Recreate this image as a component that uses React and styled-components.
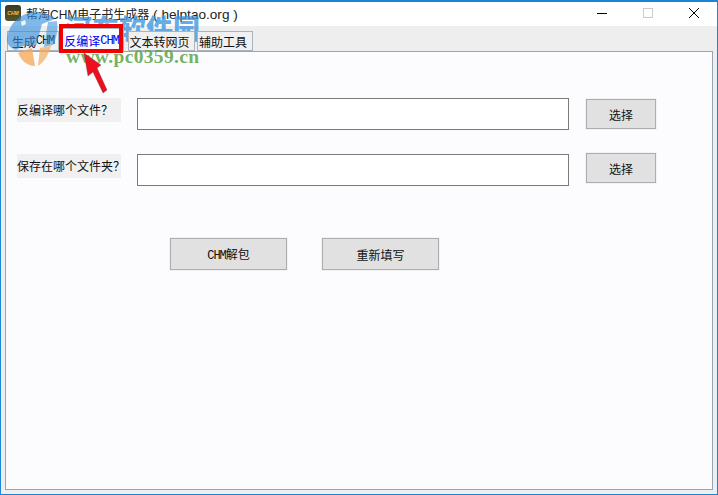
import React from "react";
import styled, { createGlobalStyle } from "styled-components";

const GlobalStyle = createGlobalStyle`
    html, body {
        margin: 0;
        padding: 0;
        width: 718px;
        height: 495px;
        overflow: hidden;
        background: #eeeeee;
    }
    * {
        box-sizing: border-box;
    }
`

const Window = styled.div`
    position: relative;
    display: flex;
    flex-direction: column;
    width: 718px;
    height: 495px;
    background: #eeeeee;
    border: 1px solid #1b86d8;
    border-top-width: 2px;
    font-family: "Noto Sans CJK SC", "Liberation Sans", sans-serif;
    color: #111;
    overflow: hidden;
`

const TitleBar = styled.div`
    display: flex;
    align-items: center;
    height: 24px;
    flex-shrink: 0;
    background: #fff;
`

const AppIcon = styled.div`
    display: flex;
    align-items: center;
    justify-content: center;
    width: 16px;
    height: 16px;
    margin: 0 0 2px 4px;
    border-radius: 3px;
    background: linear-gradient(#3a3a22, #57552a);
    color: #e5c84a;
    font: italic bold 5px "Liberation Sans", sans-serif;
`

const Title = styled.div`
    margin: 0 0 2px 5px;
    font-family: "Liberation Sans", "Noto Sans CJK SC", sans-serif;
    font-size: 12px;
    color: #222;
    white-space: pre;
`

const TitleLatin = styled.span`
    font-size: 13.6px;
`

const WindowButtons = styled.div`
    display: flex;
    margin-left: auto;
    height: 100%;
`

const WindowButton = styled.div`
    display: flex;
    align-items: center;
    justify-content: center;
    width: 46px;
    height: 100%;
    padding-bottom: 2px;
`

const TabStrip = styled.div`
    display: flex;
    align-items: flex-end;
    height: 25px;
    flex-shrink: 0;
    padding-left: 6px;
`

const Tab = styled.div`
    display: flex;
    align-items: center;
    justify-content: center;
    width: ${(props) => props.width}px;
    height: ${(props) => (props.active ? 24 : 20)}px;
    margin-left: ${(props) => props.offset || 0}px;
    padding-right: ${(props) => props.pad || 0}px;
    background: ${(props) => (props.active ? "#fcfcff" : "#f0f0f0")};
    border: 1px solid #a9b4bf;
    border-bottom: ${(props) => (props.active ? "none" : "1px solid #a9b4bf")};
    color: ${(props) => (props.active ? "#0000ee" : "#111")};
    font-size: 12px;
    white-space: nowrap;
    position: relative;
    z-index: ${(props) => (props.active ? 2 : 1)};
    margin-bottom: ${(props) => (props.active ? "-1px" : "0")};
`

const Small = styled.span`
    font-family: "Liberation Mono", monospace;
    font-size: 12px;
    letter-spacing: -1.1px;
`

const Panel = styled.div`
    display: flex;
    flex-direction: column;
    width: 708px;
    height: 439px;
    margin-left: 4px;
    padding: 46px 0 0 11px;
    background: #fcfcff;
    border: 1px solid #94a5b5;
`

const FormRow = styled.div`
    display: flex;
    align-items: flex-start;
    height: 32px;
    margin-bottom: 24px;
`

const Label = styled.div`
    display: flex;
    align-items: center;
    width: 104px;
    height: 24px;
    padding-bottom: 2px;
    background: #f0f0f0;
    font-size: 12px;
    white-space: nowrap;
`

const PathInput = styled.input`
    width: 432px;
    height: 32px;
    margin-left: 16px;
    background: #fff;
    border: 1px solid #7a7a7a;
    outline: none;
`

const Button = styled.button`
    width: ${(props) => props.width}px;
    height: ${(props) => props.height}px;
    padding: 0;
    background: #e1e1e1;
    border: 1px solid #adadad;
    box-shadow: 0 0 0 1px #f2f2f4;
    color: #111;
    font-family: inherit;
    font-size: 12px;
`

const PickButton = styled(Button)`
    margin-left: 17px;
    margin-top: ${(props) => props.top}px;
`

const ActionRow = styled.div`
    display: flex;
    gap: 35px;
    margin: 28px 0 0 153px;
`

const Watermark = styled.div`
    position: absolute;
    left: 0;
    top: 10px;
    width: 210px;
    height: 60px;
    pointer-events: none;
`

const WatermarkTitle = styled.div`
    position: absolute;
    left: 64px;
    top: -3px;
    z-index: 0;
    font-size: 27px;
    font-weight: 900;
    line-height: 38px;
    white-space: nowrap;
    color: rgba(60, 150, 225, 0.8);
`

const WatermarkUrl = styled.div`
    position: absolute;
    left: 65px;
    top: 34px;
    z-index: 3;
    font-family: "Liberation Serif", serif;
    font-size: 19.5px;
    font-weight: bold;
    line-height: 22px;
    letter-spacing: 0.35px;
    color: rgba(92, 165, 70, 0.85);
    white-space: nowrap;
`

const WatermarkLogo = styled.svg`
    position: absolute;
    left: 5px;
    top: 0;
    z-index: 3;
`

const Highlight = styled.div`
    position: absolute;
    left: 58px;
    top: 22px;
    z-index: 4;
    width: 64px;
    height: 29px;
    border: 4px solid #f00000;
    pointer-events: none;
`

const Arrow = styled.svg`
    position: absolute;
    left: 79px;
    top: 50px;
    z-index: 4;
    pointer-events: none;
`

export default function App() {
    return (
        <>
            <GlobalStyle />
            <Window>
                <TitleBar>
                    <AppIcon>CHM</AppIcon>
                    <Title>帮淘CHM电子书生成器<TitleLatin> ( helptao.org )</TitleLatin></Title>
                    <WindowButtons>
                        <WindowButton>
                            <svg width="12" height="12" viewBox="0 0 12 12">
                                <path d="M1 6.5h10" stroke="#000" strokeWidth="1" />
                            </svg>
                        </WindowButton>
                        <WindowButton>
                            <svg width="12" height="12" viewBox="0 0 12 12">
                                <rect x="1.5" y="1.5" width="9" height="9" fill="none" stroke="#cccccc" />
                            </svg>
                        </WindowButton>
                        <WindowButton>
                            <svg width="12" height="12" viewBox="0 0 12 12">
                                <path d="M1 1l10 10M11 1L1 11" stroke="#000" strokeWidth="1" />
                            </svg>
                        </WindowButton>
                    </WindowButtons>
                </TitleBar>
                <TabStrip>
                    <Tab width={52}>生成<Small>CHM</Small></Tab>
                    <Tab width={65} active="true">反编译<Small>CHM</Small></Tab>
                    <Tab width={67} offset={4} pad={4}>文本转网页</Tab>
                    <Tab width={56} offset={2} pad={4}>辅助工具</Tab>
                </TabStrip>
                <Panel>
                    <FormRow>
                        <Label>反编译哪个文件？</Label>
                        <PathInput />
                        <PickButton width={70} height={30} top={1}>选择</PickButton>
                    </FormRow>
                    <FormRow>
                        <Label>保存在哪个文件夹？</Label>
                        <PathInput />
                        <PickButton width={70} height={30} top={-1}>选择</PickButton>
                    </FormRow>
                    <ActionRow>
                        <Button width={117} height={32}><Small>CHM</Small>解包</Button>
                        <Button width={117} height={32}>重新填写</Button>
                    </ActionRow>
                </Panel>
                <Watermark>
                    <WatermarkLogo width="54" height="56" viewBox="0 0 54 56">
                        <path d="M1 28C2 12 14 1 29 0c8 0 15 2 20 7L36 12 30 34 17 34 10 38C5 36 1 33 1 28z" fill="rgba(50,140,220,0.62)" />
                        <path d="M42 10L51 9c1 8 0 16-4 24l-9 2z" fill="rgba(50,140,220,0.55)" />
                        <path d="M15 10l4-2 1 4-4 2z" fill="rgba(255,255,255,0.9)" />
                        <path d="M12 41L26 36l3 18C21 54 15 48 12 41z" fill="rgba(245,170,90,0.8)" />
                        <path d="M34 36l11-2C42 44 38 50 32 54z" fill="rgba(245,170,90,0.7)" />
                    </WatermarkLogo>
                    <WatermarkTitle>河东软件园</WatermarkTitle>
                    <WatermarkUrl>www.pc0359.cn</WatermarkUrl>
                </Watermark>
                <Highlight />
                <Arrow width="34" height="46" viewBox="0 0 34 46">
                    <path d="M4 1L8 24 13 20 23 41 27 38 17 16 21 13z" fill="#ee0f1c" stroke="rgba(90,60,60,0.35)" strokeWidth="1" />
                </Arrow>
            </Window>
        </>
    );
}
